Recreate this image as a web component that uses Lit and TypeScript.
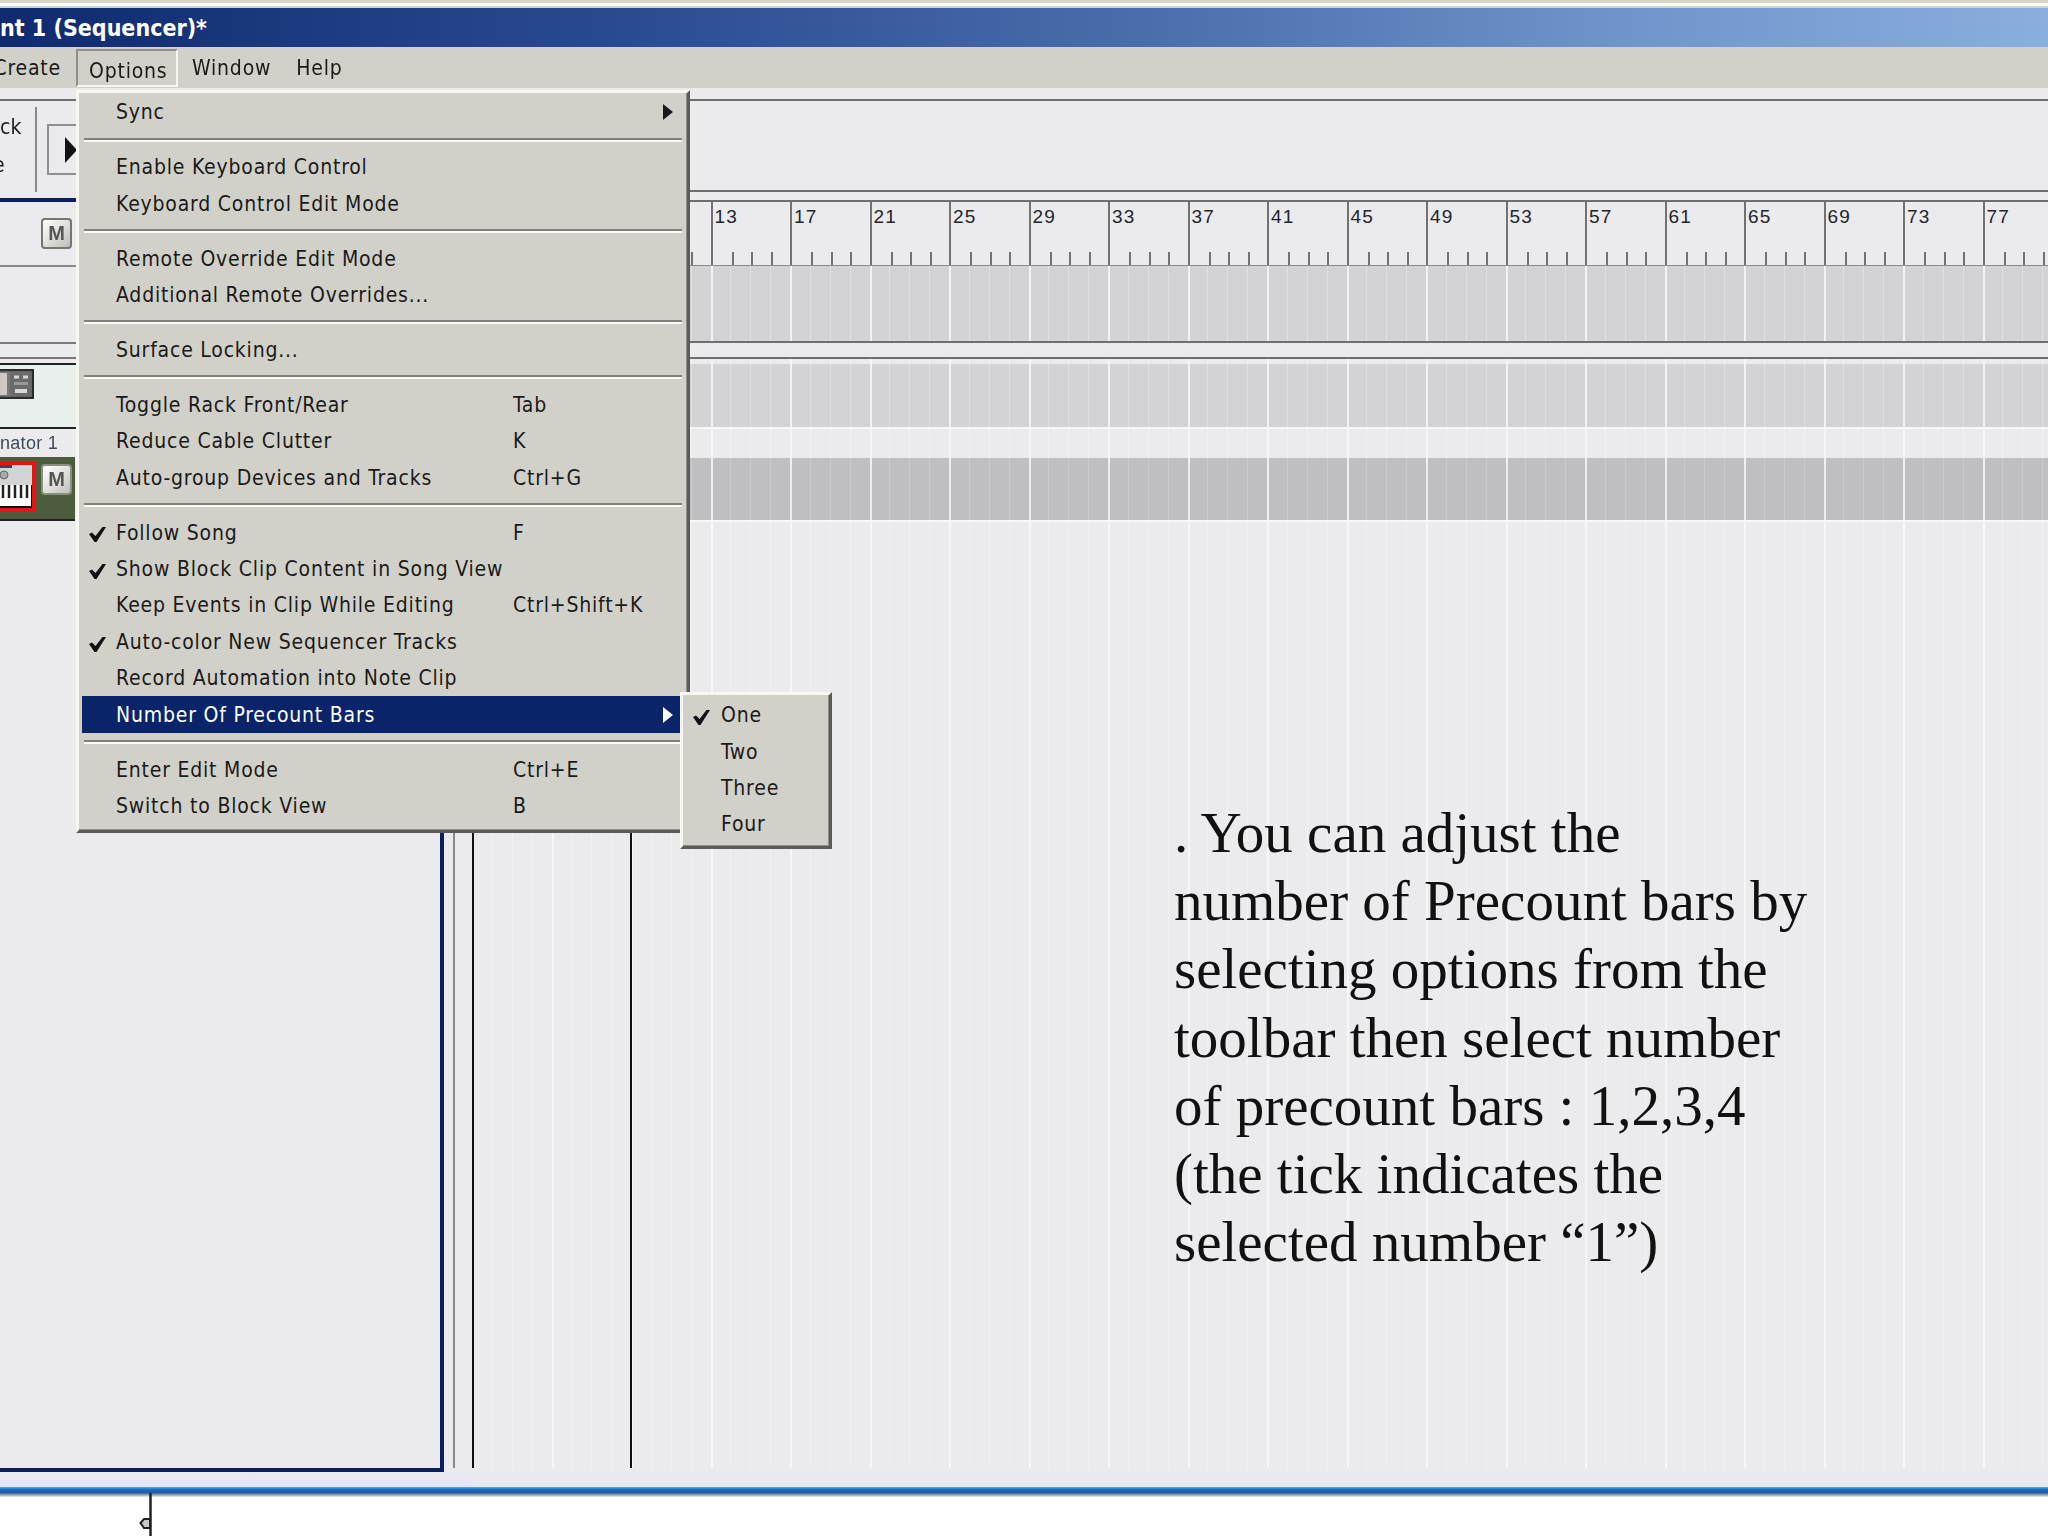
import { LitElement, html, css, svg } from "lit";
import { customElement } from "lit/decorators.js";

type Item = { label: string; key?: string; check?: boolean; arrow?: boolean; active?: boolean } | null;

const MENU: Item[] = [
  { label: "Sync", arrow: true },
  null,
  { label: "Enable Keyboard Control" },
  { label: "Keyboard Control Edit Mode" },
  null,
  { label: "Remote Override Edit Mode" },
  { label: "Additional Remote Overrides..." },
  null,
  { label: "Surface Locking..." },
  null,
  { label: "Toggle Rack Front/Rear", key: "Tab" },
  { label: "Reduce Cable Clutter", key: "K" },
  { label: "Auto-group Devices and Tracks", key: "Ctrl+G" },
  null,
  { label: "Follow Song", key: "F", check: true },
  { label: "Show Block Clip Content in Song View", check: true },
  { label: "Keep Events in Clip While Editing", key: "Ctrl+Shift+K" },
  { label: "Auto-color New Sequencer Tracks", check: true },
  { label: "Record Automation into Note Clip" },
  { label: "Number Of Precount Bars", arrow: true, active: true },
  null,
  { label: "Enter Edit Mode", key: "Ctrl+E" },
  { label: "Switch to Block View", key: "B" },
];

const NOTE = [
  ". You can adjust the",
  "number of Precount bars by",
  "selecting options from the",
  "toolbar then select number",
  "of precount bars : 1,2,3,4",
  "(the tick indicates the",
  "selected number “1”)",
];

const BARS = Array.from({ length: 20 }, (_, i) => i * 4 + 1);
const CELLS = Array.from({ length: 80 }, (_, i) => i);

const check = svg`<svg class="check" viewBox="0 0 17 15" width="17" height="15"><path d="M0 7 L3 5.5 L6.5 9 L13.5 0 H17 L7.5 15 H5.5 Z" fill="#111"/></svg>`;
const arrow = svg`<svg class="arrow" viewBox="0 0 10 16" width="10" height="16"><path d="M0 0 L10 8 L0 16 Z" fill="currentColor"/></svg>`;

@customElement("app-root")
export class AppRoot extends LitElement {
  static styles = css`
    :host {
      display: block;
      width: 2048px;
      height: 1536px;
      overflow: hidden;
      background: #fff;
      font-family: "DejaVu Sans", Tahoma, sans-serif;
      font-stretch: condensed;
      color: #1a1a1a;
    }
    .shell {
      position: relative;
      width: 2048px;
      height: 1536px;
      display: flex;
      flex-direction: column;
      overflow: hidden;
      filter: blur(0.55px);
    }
    .top-strip {
      height: 8px;
      flex: none;
      background: linear-gradient(#d5d5c8 0 3px, #fdfdf8 3px 6px, #cfd3cf 6px);
    }
    .titlebar {
      height: 39px;
      flex: none;
      display: flex;
      align-items: center;
      background: linear-gradient(90deg, #0f2a6e 0, #2a4a90 30%, #4f74b0 60%, #6d93cb 78%, #8aaedd 100%);
      color: #fff;
      font-size: 23px;
      font-weight: 700;
      white-space: nowrap;
    }
    .menubar {
      height: 41px;
      flex: none;
      display: flex;
      align-items: center;
      background: #d2d1c9;
      font-size: 21px;
      letter-spacing: 0.8px;
      white-space: nowrap;
    }
    .mb-clip {
      width: 76px;
      flex: none;
      overflow: hidden;
      display: flex;
      justify-content: flex-end;
      padding-right: 15px;
      box-sizing: border-box;
    }
    .mb-open {
      width: 102px;
      height: 38px;
      flex: none;
      box-sizing: border-box;
      display: flex;
      align-items: center;
      padding: 6px 0 0 11px;
      border: 2px solid;
      border-color: #8f8f8a #f6f6f2 #f6f6f2 #8f8f8a;
    }
    .mb-item {
      margin-left: 14px;
      margin-right: 11px;
    }
    .workspace {
      flex: 1;
      min-height: 0;
      display: flex;
    }
    .leftcol {
      width: 472px;
      flex: none;
      display: flex;
      flex-direction: column;
      background: #ebebed;
    }
    .toolbar {
      height: 110px;
      flex: none;
      display: flex;
      flex-direction: column;
    }
    .tb-gap {
      height: 11px;
      flex: none;
    }
    .rule {
      height: 2px;
      flex: none;
      background: #6e6e6e;
    }
    .tb-body {
      flex: 1;
      display: flex;
      align-items: center;
    }
    .tb-labels {
      width: 37px;
      height: 85px;
      flex: none;
      box-sizing: border-box;
      border-right: 2px solid #8a8a8a;
      overflow: hidden;
      font-size: 21px;
      line-height: 38px;
      padding-top: 1px;
      white-space: nowrap;
    }
    .tb-labels .e {
      margin-left: -7px;
    }
    .tb-play {
      width: 40px;
      height: 51px;
      flex: none;
      margin-left: 10px;
      box-sizing: border-box;
      border: 2px solid #8f8f8f;
      display: flex;
      align-items: center;
      padding-left: 16px;
    }
    .trackarea {
      flex: 1;
      min-height: 0;
      display: flex;
      flex-direction: column;
    }
    .frame-row {
      flex: none;
      height: 1274px;
      display: flex;
    }
    .frame {
      width: 444px;
      flex: none;
      box-sizing: border-box;
      border: 4px solid #0c2060;
      border-left: none;
      display: flex;
      flex-direction: column;
    }
    .gutter {
      flex: 1;
    }
    .gutter-line {
      margin-left: 9px;
      width: 2px;
      height: calc(100% - 4px);
      background: #8a8a8a;
    }
    .under {
      flex: 1;
      background: linear-gradient(#e9e9ef, #e3e7f6);
    }
    .th-head {
      height: 65px;
      flex: none;
      display: flex;
      align-items: center;
      padding-left: 41px;
      box-sizing: border-box;
      border-bottom: 2px solid #8a8a8a;
    }
    .m {
      width: 31px;
      height: 31px;
      flex: none;
      box-sizing: border-box;
      display: flex;
      align-items: center;
      justify-content: center;
      border: 2px solid #77776f;
      border-radius: 4px;
      background: linear-gradient(135deg, #fff, #d9d9d6 60%, #bdbdb8);
      color: #555;
      font-family: "Liberation Sans", sans-serif;
      font-stretch: normal;
      font-weight: 700;
      font-size: 20px;
    }
    .th-gap-a { height: 75px; flex: none; border-bottom: 2px solid #7a7a7a; }
    .th-gap-b { height: 13px; flex: none; border-bottom: 2px solid #7a7a7a; }
    .th-gap-c { height: 4px; flex: none; border-bottom: 2px solid #222; }
    .track-a {
      height: 64px;
      flex: none;
      display: flex;
      align-items: flex-start;
      padding-top: 4px;
      box-sizing: border-box;
      background: #e8efed;
      border-bottom: 2px solid #222;
    }
    .track-name {
      height: 28px;
      flex: none;
      display: flex;
      align-items: center;
      font-family: "Liberation Sans", sans-serif;
      font-stretch: normal;
      font-size: 18px;
      color: #3f4a5c;
      letter-spacing: 0.3px;
    }
    .track-b {
      height: 64px;
      flex: none;
      width: 75px;
      box-sizing: border-box;
      display: flex;
      align-items: flex-start;
      padding-top: 7px;
      gap: 5px;
      background: #4e5c3e;
      border-bottom: 2px solid #222;
    }
    .track-b svg {
      margin-top: -3px;
    }
    .track-b .m {
      background: linear-gradient(135deg, #fff, #dcdcd8 60%, #bfbfb8);
      border-color: #8a8f80;
    }
    .rightcol {
      flex: 1;
      min-width: 0;
      position: relative;
      display: flex;
      flex-direction: column;
      background: #ebebed;
    }
    .gap { flex: none; }
    .g-11 { height: 11px; }
    .g-89 { height: 89px; }
    .g-8 { height: 8px; }
    .ruler {
      height: 63px;
      flex: none;
      display: flex;
      background: #ebebed;
      font-family: "Liberation Sans", sans-serif;
      font-stretch: normal;
    }
    .bar {
      width: 79.5px;
      flex: none;
      box-sizing: border-box;
      border-left: 2px solid #727272;
      display: flex;
      flex-direction: column;
    }
    .bar-n {
      font-size: 19px;
      line-height: 22px;
      letter-spacing: 1.2px;
      padding: 4px 0 0 2px;
      color: #23252e;
    }
    .ticks {
      margin-top: auto;
      height: 13px;
      display: grid;
      grid-template-columns: repeat(4, 1fr);
    }
    .ticks i + i {
      border-left: 2px solid #727272;
    }
    .rule-soft {
      height: 1px;
      flex: none;
      background: #8a8a8a;
    }
    .grid {
      --bar-c: #f6f6f8;
      --q-c: #f1f1f3;
      display: flex;
      overflow: hidden;
    }
    .grid i {
      width: 19.875px;
      flex: none;
      box-sizing: border-box;
      border-left: 1px solid var(--q-c);
    }
    .grid i.b {
      border-left: 2px solid var(--bar-c);
    }
    .band-a { background-color: #d3d3d6; --bar-c: #f2f2f4; --q-c: #e0e0e2; }
    .band-b { background-color: #bfbec2; --bar-c: #eeeef0; --q-c: #cbcace; }
    .h-75 { height: 75px; flex: none; }
    .h-14 { height: 14px; flex: none; }
    .h-5 { height: 5px; flex: none; }
    .h-63 { height: 63px; flex: none; }
    .h-31 { height: 31px; flex: none; box-sizing: border-box; border-top: 2px solid #f8f8fa; }
    .h-62 { height: 62px; flex: none; }
    .rest { flex: 1; border-top: 2px solid #f8f8fa; }
    .under-r { height: 19px; flex: none; background: linear-gradient(#ebebee, #e6e8f3); }
    .locator {
      position: absolute;
      top: 3px;
      bottom: 19px;
      width: 2px;
      background: #111;
    }
    .loc-l { left: 0; }
    .loc-e { left: 158px; }
    .blue-line {
      height: 10px;
      flex: none;
      background: linear-gradient(#4fb2ea 0, #1a6cc0 25%, #1a5aa8 55%, #7c8a98 72%, #ececec 100%);
    }
    .foot {
      height: 39px;
      flex: none;
      display: flex;
      background: #fff;
    }
    .foot svg {
      margin-left: 139px;
      margin-top: -4px;
    }
    .menu, .submenu {
      position: absolute;
      box-sizing: border-box;
      background: #d2d1c9;
      border: 3px solid;
      border-color: #f8f8f3 #5b5b57 #5b5b57 #f8f8f3;
      box-shadow: inset -1px -1px 0 #8f8f8a;
      font-size: 21px;
      letter-spacing: 0.8px;
      white-space: nowrap;
    }
    .menu {
      left: 76px;
      top: 90px;
      width: 614px;
      height: 743px;
      padding: 1px 3px 0;
    }
    .submenu {
      left: 680px;
      top: 692px;
      width: 152px;
      height: 157px;
      padding: 2px 0;
    }
    .row {
      height: 36.4px;
      display: flex;
      align-items: center;
      position: relative;
    }
    .row .label { margin-left: 34px; }
    .row .key {
      position: absolute;
      left: 431px;
    }
    .row .check {
      position: absolute;
      left: 7px;
      top: 13px;
    }
    .row .arrow {
      position: absolute;
      left: 581px;
    }
    .row.active {
      background: #0a246a;
      color: #fff;
    }
    .sep {
      height: 18.6px;
      display: flex;
      flex-direction: column;
      justify-content: center;
    }
    .sep::before {
      content: "";
      height: 2px;
      background: #80807c;
      margin: 0 2px;
    }
    .sep::after {
      content: "";
      height: 2px;
      background: #fbfbf6;
      margin: 0 2px;
    }
    .sub-row {
      height: 36.4px;
      display: flex;
      align-items: center;
      position: relative;
      padding-left: 38px;
    }
    .sub-row .check {
      position: absolute;
      left: 10px;
      top: 13px;
    }
    .note {
      position: absolute;
      left: 1174px;
      top: 799px;
      font-family: "Liberation Serif", "Times New Roman", serif;
      font-stretch: normal;
      font-size: 57px;
      line-height: 68.2px;
      color: #111;
      white-space: nowrap;
    }
  `;

  private grid(cls: string) {
    return html`<div class="grid ${cls}">
      ${CELLS.map((i) => html`<i class=${i % 4 === 0 ? "b" : ""}></i>`)}
    </div>`;
  }

  private menuRow(it: Item) {
    if (!it) return html`<div class="sep"></div>`;
    return html`<div class="row ${it.active ? "active" : ""}">
      ${it.check ? check : ""}
      <span class="label">${it.label}</span>
      ${it.key ? html`<span class="key">${it.key}</span>` : ""}
      ${it.arrow ? arrow : ""}
    </div>`;
  }

  render() {
    return html`<div class="shell">
      <div class="top-strip"></div>
      <div class="titlebar"><span>nt 1 (Sequencer)*</span></div>
      <div class="menubar">
        <div class="mb-clip"><span>Create</span></div>
        <div class="mb-open"><span>Options</span></div>
        <span class="mb-item">Window</span>
        <span class="mb-item">Help</span>
      </div>
      <div class="workspace">
        <div class="leftcol">
          <div class="toolbar">
            <div class="tb-gap"></div>
            <div class="rule"></div>
            <div class="tb-body">
              <div class="tb-labels"><div>ck</div><div class="e">e</div></div>
              <div class="tb-play">
                <svg width="12" height="26" viewBox="0 0 12 26"><path d="M0 0 L12 13 L0 26 Z" fill="#111"/></svg>
              </div>
            </div>
          </div>
          <div class="trackarea">
            <div class="frame-row">
              <div class="frame">
                <div class="th-head"><div class="m">M</div></div>
                <div class="th-gap-a"></div>
                <div class="th-gap-b"></div>
                <div class="th-gap-c"></div>
                <div class="track-a">
                  <svg width="34" height="30" viewBox="0 0 34 30">
                    <rect x="-2" y="1" width="35" height="28" fill="#777" stroke="#2c2c2c" stroke-width="2.5"/>
                    <rect x="-2" y="4" width="9" height="22" fill="#cfc9c6"/>
                    <rect x="10" y="3" width="21" height="24" fill="#6a6a6a"/>
                    <path d="M14 8 H19 M23 8 H28" stroke="#d8d8d8" stroke-width="3"/>
                    <rect x="14" y="13" width="14" height="3" fill="#9a9a9a"/>
                    <rect x="15" y="20" width="12" height="4" fill="#d8d8d8"/>
                  </svg>
                </div>
                <div class="track-name"><span>nator 1</span></div>
                <div class="track-b">
                  <svg width="36" height="51" viewBox="0 0 36 51">
                    <rect x="-4" y="2" width="38" height="47" fill="#111" stroke="#e81414" stroke-width="4"/>
                    <rect x="-2" y="4" width="34" height="20" fill="#d4d4d4"/>
                    <rect x="-2" y="4" width="14" height="3" fill="#444"/>
                    <circle cx="4" cy="14" r="4" fill="#a8a8a8" stroke="#666"/>
                    <rect x="-2" y="24" width="33" height="21" fill="#fff"/>
                    <path d="M3 24 V37 M9 24 V37 M15 24 V37 M21 24 V37 M27 24 V37" stroke="#222" stroke-width="2.5"/>
                  </svg>
                  <div class="m">M</div>
                </div>
              </div>
              <div class="gutter"><div class="gutter-line"></div></div>
            </div>
            <div class="under"></div>
          </div>
        </div>
        <div class="rightcol">
          <div class="gap g-11"></div>
          <div class="rule"></div>
          <div class="gap g-89"></div>
          <div class="rule"></div>
          <div class="gap g-8"></div>
          <div class="rule"></div>
          <div class="ruler">
            ${BARS.map(
              (n) => html`<div class="bar">
                <span class="bar-n">${n}</span>
                <div class="ticks"><i></i><i></i><i></i><i></i></div>
              </div>`
            )}
          </div>
          <div class="rule-soft"></div>
          ${this.grid("band-a h-75")}
          <div class="rule"></div>
          <div class="h-14"></div>
          <div class="rule"></div>
          ${this.grid("h-5")}
          ${this.grid("band-a h-63")}
          ${this.grid("h-31")}
          ${this.grid("band-b h-62")}
          ${this.grid("rest")}
          <div class="under-r"></div>
          <div class="locator loc-l"></div>
          <div class="locator loc-e"></div>
        </div>
      </div>
      <div class="blue-line"></div>
      <div class="foot">
        <svg width="14" height="47" viewBox="0 0 14 47">
          <path d="M11.5 0 V47" stroke="#222" stroke-width="2.5"/>
          <path d="M1.5 30 L5 26 H11 V35 H5 Z" fill="#c9c9c9" stroke="#222" stroke-width="2"/>
        </svg>
      </div>

      <div class="note">${NOTE.map((l) => html`<div>${l}</div>`)}</div>

      <div class="menu">${MENU.map((it) => this.menuRow(it))}</div>
      <div class="submenu">
        <div class="sub-row">${check}<span>One</span></div>
        <div class="sub-row"><span>Two</span></div>
        <div class="sub-row"><span>Three</span></div>
        <div class="sub-row"><span>Four</span></div>
      </div>
    </div>`;
  }
}
